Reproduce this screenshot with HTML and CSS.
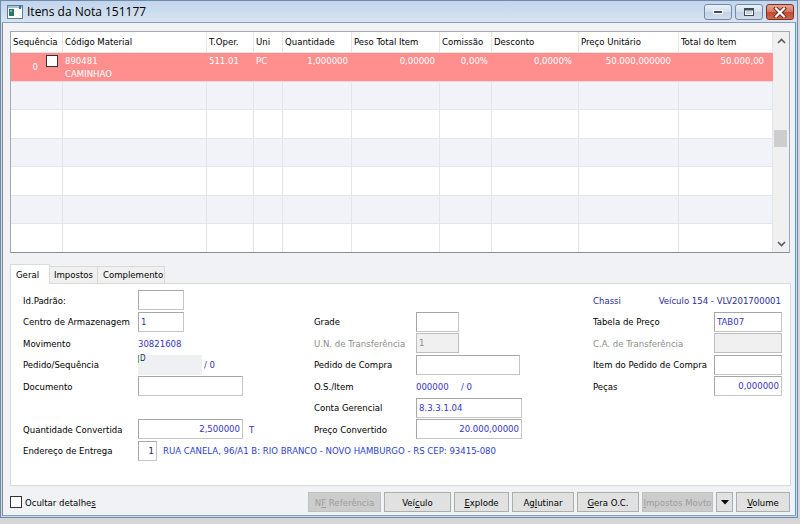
FILE: index.html
```html
<!DOCTYPE html>
<html lang="pt-BR">
<head>
<meta charset="utf-8">
<title>Itens da Nota 151177</title>
<link rel="stylesheet" href="styles.css">
</head>
<body>
<div class="window">
  <div class="titlebar">
    <svg class="appicon" width="16" height="14" viewBox="0 0 16 14">
      <rect x="0.5" y="0.5" width="15" height="13" fill="#fff" stroke="#5d7b9a"/>
      <rect x="1" y="1" width="14" height="2" fill="#a9c0d9"/>
      <rect x="2" y="4" width="5" height="7" fill="#2c7a66"/>
      <rect x="3" y="5" width="2" height="2" fill="#6cc09c"/>
      <rect x="12" y="1" width="2" height="3" fill="#3c6fa8"/>
    </svg>
    <span class="title">Itens da Nota 151177</span>
    <div class="caps">
      <div class="cap">
        <svg width="12" height="6" viewBox="0 0 12 6"><rect x="1.5" y="1.5" width="9" height="3" fill="#3f4a5a" stroke="#fff"/></svg>
      </div>
      <div class="cap">
        <svg width="12" height="10" viewBox="0 0 12 10"><rect x="1.5" y="1.5" width="9" height="7" fill="#fff" stroke="#3f4a5a"/><rect x="3" y="4" width="6" height="3" fill="#c9d6e6"/><rect x="1.5" y="1.5" width="9" height="2" fill="#3f4a5a"/></svg>
      </div>
      <div class="cap close">
        <svg width="14" height="11" viewBox="0 0 14 11"><path d="M3 1.5 L11 9.5 M11 1.5 L3 9.5" stroke="#6b2418" stroke-width="4" stroke-linecap="square"/><path d="M3 1.5 L11 9.5 M11 1.5 L3 9.5" stroke="#fff" stroke-width="2.2" stroke-linecap="square"/></svg>
      </div>
    </div>
  </div>

  <div class="client">
    <div class="gridbox">
      <div class="gridmain">
        <div class="grow head">
          <div class="c">Sequência</div>
          <div class="c">Código Material</div>
          <div class="c">T.Oper.</div>
          <div class="c">Uni</div>
          <div class="c">Quantidade</div>
          <div class="c">Peso Total Item</div>
          <div class="c">Comissão</div>
          <div class="c">Desconto</div>
          <div class="c">Preço Unitário</div>
          <div class="c">Total do Item</div>
        </div>
        <div class="grow sel">
          <div class="c seq"><span class="seqnum">0</span><span class="chk"></span></div>
          <div class="c">890481<br>CAMINHAO</div>
          <div class="c">511.01</div>
          <div class="c">PC</div>
          <div class="c num">1,000000</div>
          <div class="c num p4">0,00000</div>
          <div class="c num">0,00%</div>
          <div class="c num p6">0,0000%</div>
          <div class="c num p7">50.000,000000</div>
          <div class="c num p8">50.000,00</div>
        </div>
        <div class="grow alt"><div class="c"></div><div class="c"></div><div class="c"></div><div class="c"></div><div class="c"></div><div class="c"></div><div class="c"></div><div class="c"></div><div class="c"></div><div class="c"></div></div>
        <div class="grow"><div class="c"></div><div class="c"></div><div class="c"></div><div class="c"></div><div class="c"></div><div class="c"></div><div class="c"></div><div class="c"></div><div class="c"></div><div class="c"></div></div>
        <div class="grow alt"><div class="c"></div><div class="c"></div><div class="c"></div><div class="c"></div><div class="c"></div><div class="c"></div><div class="c"></div><div class="c"></div><div class="c"></div><div class="c"></div></div>
        <div class="grow"><div class="c"></div><div class="c"></div><div class="c"></div><div class="c"></div><div class="c"></div><div class="c"></div><div class="c"></div><div class="c"></div><div class="c"></div><div class="c"></div></div>
        <div class="grow alt"><div class="c"></div><div class="c"></div><div class="c"></div><div class="c"></div><div class="c"></div><div class="c"></div><div class="c"></div><div class="c"></div><div class="c"></div><div class="c"></div></div>
        <div class="grow last"><div class="c"></div><div class="c"></div><div class="c"></div><div class="c"></div><div class="c"></div><div class="c"></div><div class="c"></div><div class="c"></div><div class="c"></div><div class="c"></div></div>
      </div>
      <div class="vscroll">
        <div class="sbtn"><svg width="9" height="6" viewBox="0 0 9 6"><path d="M1 5 L4.5 1.5 L8 5" fill="none" stroke="#5a5a5a" stroke-width="1.6"/></svg></div>
        <div class="track"><div class="thumb"></div></div>
        <div class="sbtn"><svg width="9" height="6" viewBox="0 0 9 6"><path d="M1 1 L4.5 4.5 L8 1" fill="none" stroke="#5a5a5a" stroke-width="1.6"/></svg></div>
      </div>
    </div>

    <div class="tabs">
      <div class="tab active">Geral</div>
      <div class="tab">Impostos</div>
      <div class="tab">Complemento</div>
    </div>

    <div class="panel">
      <div class="form">
        <!-- row 1 -->
        <div class="lbl">Id.Padrão:</div>
        <div class="f"><div class="tb w46"></div></div>
        <div></div><div></div>
        <div class="chassi"><span>Chassi</span><span>Veículo 154 - VLV201700001</span></div>
        <!-- row 2 -->
        <div class="lbl">Centro de Armazenagem</div>
        <div class="f"><div class="tb w46 val">1</div></div>
        <div class="lbl">Grade</div>
        <div class="f"><div class="tb w43"></div></div>
        <div class="lbl">Tabela de Preço</div>
        <div class="f"><div class="tb w68 val">TAB07</div></div>
        <!-- row 3 -->
        <div class="lbl">Movimento</div>
        <div class="f val">30821608</div>
        <div class="lbl dis">U.N. de Transferência</div>
        <div class="f"><div class="tb w43 disabled">1</div></div>
        <div class="lbl dis">C.A. de Transferência</div>
        <div class="f"><div class="tb w68 disabled"></div></div>
        <!-- row 4 -->
        <div class="lbl">Pedido/Sequência</div>
        <div class="f"><div class="seqbox"><span class="mark">D</span></div><span class="val slash">/ 0</span></div>
        <div class="lbl">Pedido de Compra</div>
        <div class="f"><div class="tb w104"></div></div>
        <div class="lbl">Item do Pedido de Compra</div>
        <div class="f"><div class="tb w68"></div></div>
        <!-- row 5 -->
        <div class="lbl">Documento</div>
        <div class="f"><div class="tb w105"></div></div>
        <div class="lbl">O.S./Item</div>
        <div class="f val"><span class="os">000000</span><span>/ 0</span></div>
        <div class="lbl">Peças</div>
        <div class="f"><div class="tb w68 val r">0,000000</div></div>
        <!-- row 6 -->
        <div></div><div></div>
        <div class="lbl">Conta Gerencial</div>
        <div class="f"><div class="tb w106 val">8.3.3.1.04</div></div>
        <div></div><div></div>
        <!-- row 7 -->
        <div class="lbl">Quantidade Convertida</div>
        <div class="f"><div class="tb w105 val r">2,500000</div><span class="val unit">T</span></div>
        <div class="lbl">Preço Convertido</div>
        <div class="f"><div class="tb w106 val r">20.000,00000</div></div>
        <div></div><div></div>
        <!-- row 8 -->
        <div class="lbl">Endereço de Entrega</div>
        <div class="addr"><div class="tb w19 r dark">1</div><span class="val addrtxt">RUA CANELA, 96/A1 B: RIO BRANCO - NOVO HAMBURGO - RS CEP: 93415-080</span></div>
      </div>
    </div>

    <div class="footer">
      <div class="hide"><span class="chk"></span><span class="hidetxt">Ocultar detalhe<u>s</u></span></div>
      <div class="btns">
        <div class="btn off b73"><span>N<u>F</u> Referência</span></div>
        <div class="btn b67"><span>Veí<u>c</u>ulo</span></div>
        <div class="btn b55"><span><u>E</u>xplode</span></div>
        <div class="btn b62"><span>Ag<u>l</u>utinar</span></div>
        <div class="btn b62"><span><u>G</u>era O.C.</span></div>
        <div class="btn off b71"><span><u>I</u>mpostos Movto</span></div>
        <div class="btn b17"><svg width="8" height="5" viewBox="0 0 8 5"><path d="M0 0 H8 L4 4.5 Z" fill="#000"/></svg></div>
        <div class="btn b54"><span><u>V</u>olume</span></div>
      </div>
    </div>
  </div>
</div>
</body>
</html>
```
FILE: styles.css
```css
* { box-sizing: border-box; }
html, body { margin: 0; padding: 0; }
body {
  width: 800px;
  height: 524px;
  overflow: hidden;
  background: #d6d6d6;
  font-family: "DejaVu Sans Condensed", "DejaVu Sans", sans-serif;
  font-stretch: condensed;
  font-size: 9.5px;
  color: #000;
}

.window {
  width: 798px;
  height: 518px;
  border: 1px solid #6f8aab;
  padding: 0 1px 1px;
  background: linear-gradient(to bottom, #c2d5ec 0, #d7e4f2 21px, #c9daee 22px);
  display: flex;
  flex-direction: column;
}

.titlebar {
  height: 21px;
  flex: none;
  display: flex;
  align-items: center;
  padding-left: 5px;
}
.appicon { display: block; margin-top: 1px; }
.title {
  margin-left: 4px;
  font-family: "Open Sans", "Noto Sans", sans-serif;
  font-stretch: normal;
  font-size: 12px;
  color: #000;
}
.caps {
  margin-left: auto;
  margin-right: 2px;
  align-self: flex-start;
  margin-top: 3px;
  display: flex;
  gap: 3px;
}
.cap {
  width: 28px;
  height: 16px;
  border: 1px solid #7389a6;
  border-radius: 3px;
  background: linear-gradient(to bottom, #e9f0f8 0, #d3dfed 50%, #c2d2e5 51%, #d0dded 100%);
  display: flex;
  align-items: center;
  justify-content: center;
}
.cap.close {
  border-color: #7e2f22;
  background: linear-gradient(to bottom, #e8a494 0, #d47662 50%, #c24a30 51%, #d2674c 100%);
}

.client {
  flex: 1;
  background: #f1f2f6;
  border: 1px solid #8c9fb8;
  border-left-color: #8a8a8a;
  border-right-color: #4d9fd6;
  display: flex;
  flex-direction: column;
}

/* grid */
.gridbox {
  width: 780px;
  height: 222px;
  margin: 8px 0 0 7px;
  border: 1px solid #a8a8a8;
  border-bottom-color: #8e8e8e;
  background: #fff;
  display: flex;
}
.gridmain {
  width: 762px;
  display: flex;
  flex-direction: column;
}
.grow {
  display: grid;
  grid-template-columns: 52px 144px 47px 29px 69px 88px 52px 87px 100px 94px;
  flex: 1;
  border-bottom: 1px solid #e4e5ea;
}
.grow.last { border-bottom: none; }
.grow.alt { background: #f2f3f8; }
.grow .c {
  border-right: 1px solid #e4e5ea;
  padding: 0 2px;
  white-space: nowrap;
  overflow: hidden;
}
.grow.head {
  flex: none;
  height: 21px;
  border-bottom-color: #e3e3e3;
}
.grow.head .c {
  line-height: 20px;
  border-right-color: #e6e6e6;
}
.grow.sel {
  background: #ff8e8e;
  color: #fff;
  border-bottom-color: #ecd9dc;
}
.grow.sel .c {
  border-right-color: transparent;
  line-height: 13px;
  padding-top: 1px;
}
.grow .c.num { text-align: right; padding-right: 3px; }
.grow .c.p4 { padding-right: 4px; }
.grow .c.p6 { padding-right: 6px; }
.grow .c.p7 { padding-right: 7px; }
.grow .c.p8 { padding-right: 8px; }
.grow .c.seq {
  display: flex;
  justify-content: flex-end;
  align-items: flex-start;
  padding-top: 0;
  padding-right: 4px;
}
.seqnum { margin-top: 7px; }
.chk {
  display: inline-block;
  width: 12px;
  height: 12px;
  border: 1px solid #333;
  background: #fff;
  flex: none;
}
.seq .chk { margin-top: 2px; margin-left: 8px; }

.vscroll {
  width: 16px;
  background: #f0f0f0;
  display: flex;
  flex-direction: column;
}
.sbtn {
  height: 17px;
  flex: none;
  display: flex;
  align-items: center;
  justify-content: center;
}
.track { flex: 1; padding-top: 81px; }
.thumb {
  width: 13px;
  height: 17px;
  margin-left: 1px;
  background: #cdcdcd;
}

/* tabs */
.tabs {
  margin: 11px 0 0 7px;
  height: 19px;
  display: flex;
  align-items: flex-end;
  position: relative;
  z-index: 1;
}
.tab {
  height: 17px;
  padding: 0 4px;
  line-height: 16px;
  background: #f0f0f0;
  border: 1px solid #d9d9d9;
  border-bottom: none;
  border-left: none;
  white-space: nowrap;
}
.tab:nth-child(2) { width: 48px; }
.tab:nth-child(3) { width: 67px; padding-left: 5px; }
.tab.active {
  width: 40px;
  height: 20px;
  margin-bottom: -1px;
  background: #fff;
  border-left: 1px solid #d9d9d9;
  padding-left: 5px;
  line-height: 19px;
}

.panel {
  width: 781px;
  height: 203px;
  margin-left: 7px;
  background: #fff;
  border: 1px solid #d9d9d9;
  padding: 6px 0 0 12px;
}
.form {
  display: grid;
  grid-template-columns: 115px 176px 102px 177px 121px 68px;
  grid-auto-rows: 21.5px;
}
.lbl, .f, .chassi, .addr {
  display: flex;
  align-items: center;
  white-space: nowrap;
  height: 20px;
}
.lbl.dis { color: #8d8d8d; }
.val { color: #3434c2; }
.chassi {
  grid-column: 5 / 7;
  justify-content: space-between;
  color: #2c2c92;
  padding-right: 1px;
}
.addr { grid-column: 2 / 7; }
.tb {
  height: 20px;
  border: 1px solid #a7a7a7;
  border-right-color: #c5c5c5;
  border-bottom-color: #c5c5c5;
  background: #fff;
  padding: 0 2px;
  line-height: 18px;
  white-space: nowrap;
  overflow: hidden;
}
.tb.r { text-align: right; }
.tb.disabled { background: #f0f0f0; color: #8d8d8d; border-color: #bdbdbd; }
.tb.dark { color: #1d1d5c; }
.w19 { width: 19px; }
.w43 { width: 43px; }
.w46 { width: 46px; }
.w68 { width: 68px; }
.w104 { width: 104px; }
.w105 { width: 105px; }
.w106 { width: 106px; }
.seqbox {
  width: 64px;
  height: 20px;
  background: #eff0f4;
  align-self: flex-start;
}
.mark {
  display: inline-block;
  color: #1e2a6e;
  font-size: 8px;
  line-height: 8px;
  padding-left: 1px;
  border-left: 1px solid #55b84a;
  vertical-align: top;
}
.slash { margin-left: 2px; }
.os { display: inline-block; width: 45px; }
.unit { margin-left: 6px; }
.addrtxt { margin-left: 6px; color: #2b3fc9; }

/* footer */
.footer {
  flex: 1;
  display: flex;
  align-items: flex-start;
  padding: 6px 5px 0 7px;
}
.hide {
  display: flex;
  align-items: center;
  height: 20px;
}
.hidetxt { margin-left: 3px; }
.btns {
  margin-left: auto;
  display: flex;
  gap: 3px;
}
.btn {
  height: 20px;
  border: 1px solid #adadad;
  background: #e1e1e1;
  display: flex;
  align-items: center;
  justify-content: center;
  white-space: nowrap;
}
.btn.off {
  background: #cccccc;
  border-color: #bfbfbf;
  color: #9c9c9c;
}
.b17 { width: 17px; }
.b54 { width: 54px; }
.b55 { width: 55px; }
.b62 { width: 62px; }
.b67 { width: 67px; }
.b71 { width: 71px; }
.b73 { width: 73px; }
```
